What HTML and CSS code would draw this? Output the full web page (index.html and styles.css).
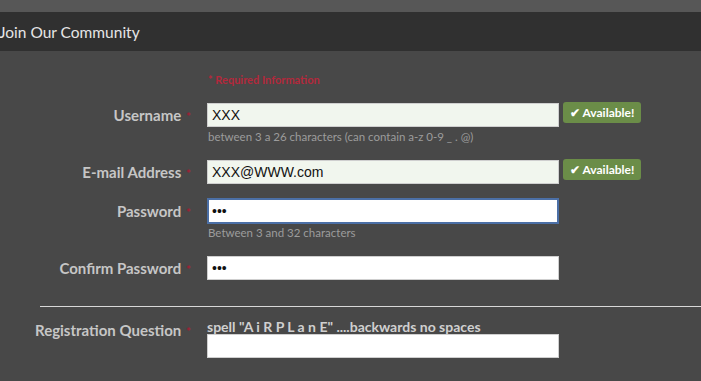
FILE: index.html
```html
<!DOCTYPE html>
<html lang="en">
<head>
  <meta charset="UTF-8" />
  <title>Join Our Community</title>
  <link rel="stylesheet" href="styles.css">
</head>
<body>

  <div class="topstrip"></div>
  <header class="title-bar">Join Our Community</header>

  <form class="register">
    <div class="required-note">* Required Information</div>

    <div class="row">
      <label class="field-label">Username <span class="star">*</span></label>
      <div class="field">
        <input type="text" class="ok" value="XXX">
        <div class="hint">between 3 a 26 characters (can contain a-z 0-9 _ . @)</div>
      </div>
      <span class="badge">&#10004; Available!</span>
    </div>

    <div class="row">
      <label class="field-label">E-mail Address <span class="star">*</span></label>
      <div class="field">
        <input type="text" class="ok" value="XXX@WWW.com">
      </div>
      <span class="badge">&#10004; Available!</span>
    </div>

    <div class="row">
      <label class="field-label">Password <span class="star">*</span></label>
      <div class="field">
        <input type="password" class="active" value="abc">
        <div class="hint">Between 3 and 32 characters</div>
      </div>
    </div>

    <div class="row">
      <label class="field-label">Confirm Password <span class="star">*</span></label>
      <div class="field">
        <input type="password" value="abc">
      </div>
    </div>

    <hr class="divider">

    <div class="row">
      <label class="field-label">Registration Question <span class="star">*</span></label>
      <div class="field">
        <div class="question">spell "A i R P L a n E" ....backwards no spaces</div>
        <input type="text">
      </div>
    </div>
  </form>

</body>
</html>
```

FILE: styles.css
```css
body {
  margin: 0;
  background-color: #484848;
  font-family: Lato, "Open Sans", sans-serif;
  color: #c8c8c8;
}

.topstrip {
  height: 12px;
  background-color: #575757;
}

.title-bar {
  height: 39px;
  line-height: 40px;
  background-color: #303030;
  color: #e6e6e6;
  font-size: 15.5px;
  margin-left: -1px;
}

.register {
  padding-top: 22px;
}

.required-note {
  margin-left: 208px;
  font-size: 11px;
  font-weight: bold;
  color: #b3283c;
  height: 13px;
  line-height: 13px;
  margin-bottom: 17px;
}

.row {
  display: grid;
  grid-template-columns: 207px 352px auto;
  align-items: start;
  margin-bottom: 16px;
}

.field-label {
  height: 24px;
  text-align: right;
  padding-right: 16px;
  font-size: 15px;
  font-weight: bold;
  line-height: 24px;
  color: #c6c6c6;
}

.star {
  color: #a02035;
  font-size: 12px;
  line-height: 1;
  margin-left: 1px;
}

.field input {
  display: block;
  box-sizing: border-box;
  width: 352px;
  height: 24px;
  margin: 0;
  padding: 0 4px;
  border: 1px solid #cfcfcf;
  border-radius: 0;
  background-color: #ffffff;
  font-family: "Liberation Sans", Arial, sans-serif;
  font-size: 14px;
  color: #111;
  outline: none;
}

.field input.ok {
  background-color: #f1f6ee;
}

.field input.active {
  border: 2px solid #4b6fa6;
  height: 26px;
  margin-top: -1px;
  margin-bottom: -1px;
  padding-left: 3px;
}

.hint {
  font-size: 11.5px;
  color: #9c9c9c;
  line-height: 15px;
  margin-top: 2px;
  margin-left: 1px;
}

.row:nth-of-type(3) {
  margin-bottom: 15px;
}

.badge {
  justify-self: start;
  margin-top: -1px;
  margin-left: 4px;
  padding: 0 7px;
  height: 21px;
  line-height: 21px;
  border-radius: 3px;
  background-color: #6b8d48;
  color: #ffffff;
  font-size: 12px;
  font-weight: bold;
}

.divider {
  margin: 26px 0 11px 40px;
  border: none;
  border-top: 1px solid #d8d8d8;
}

.question {
  font-size: 14px;
  font-weight: bold;
  color: #d0d0d0;
  line-height: 15px;
  margin-top: 1px;
}
```
